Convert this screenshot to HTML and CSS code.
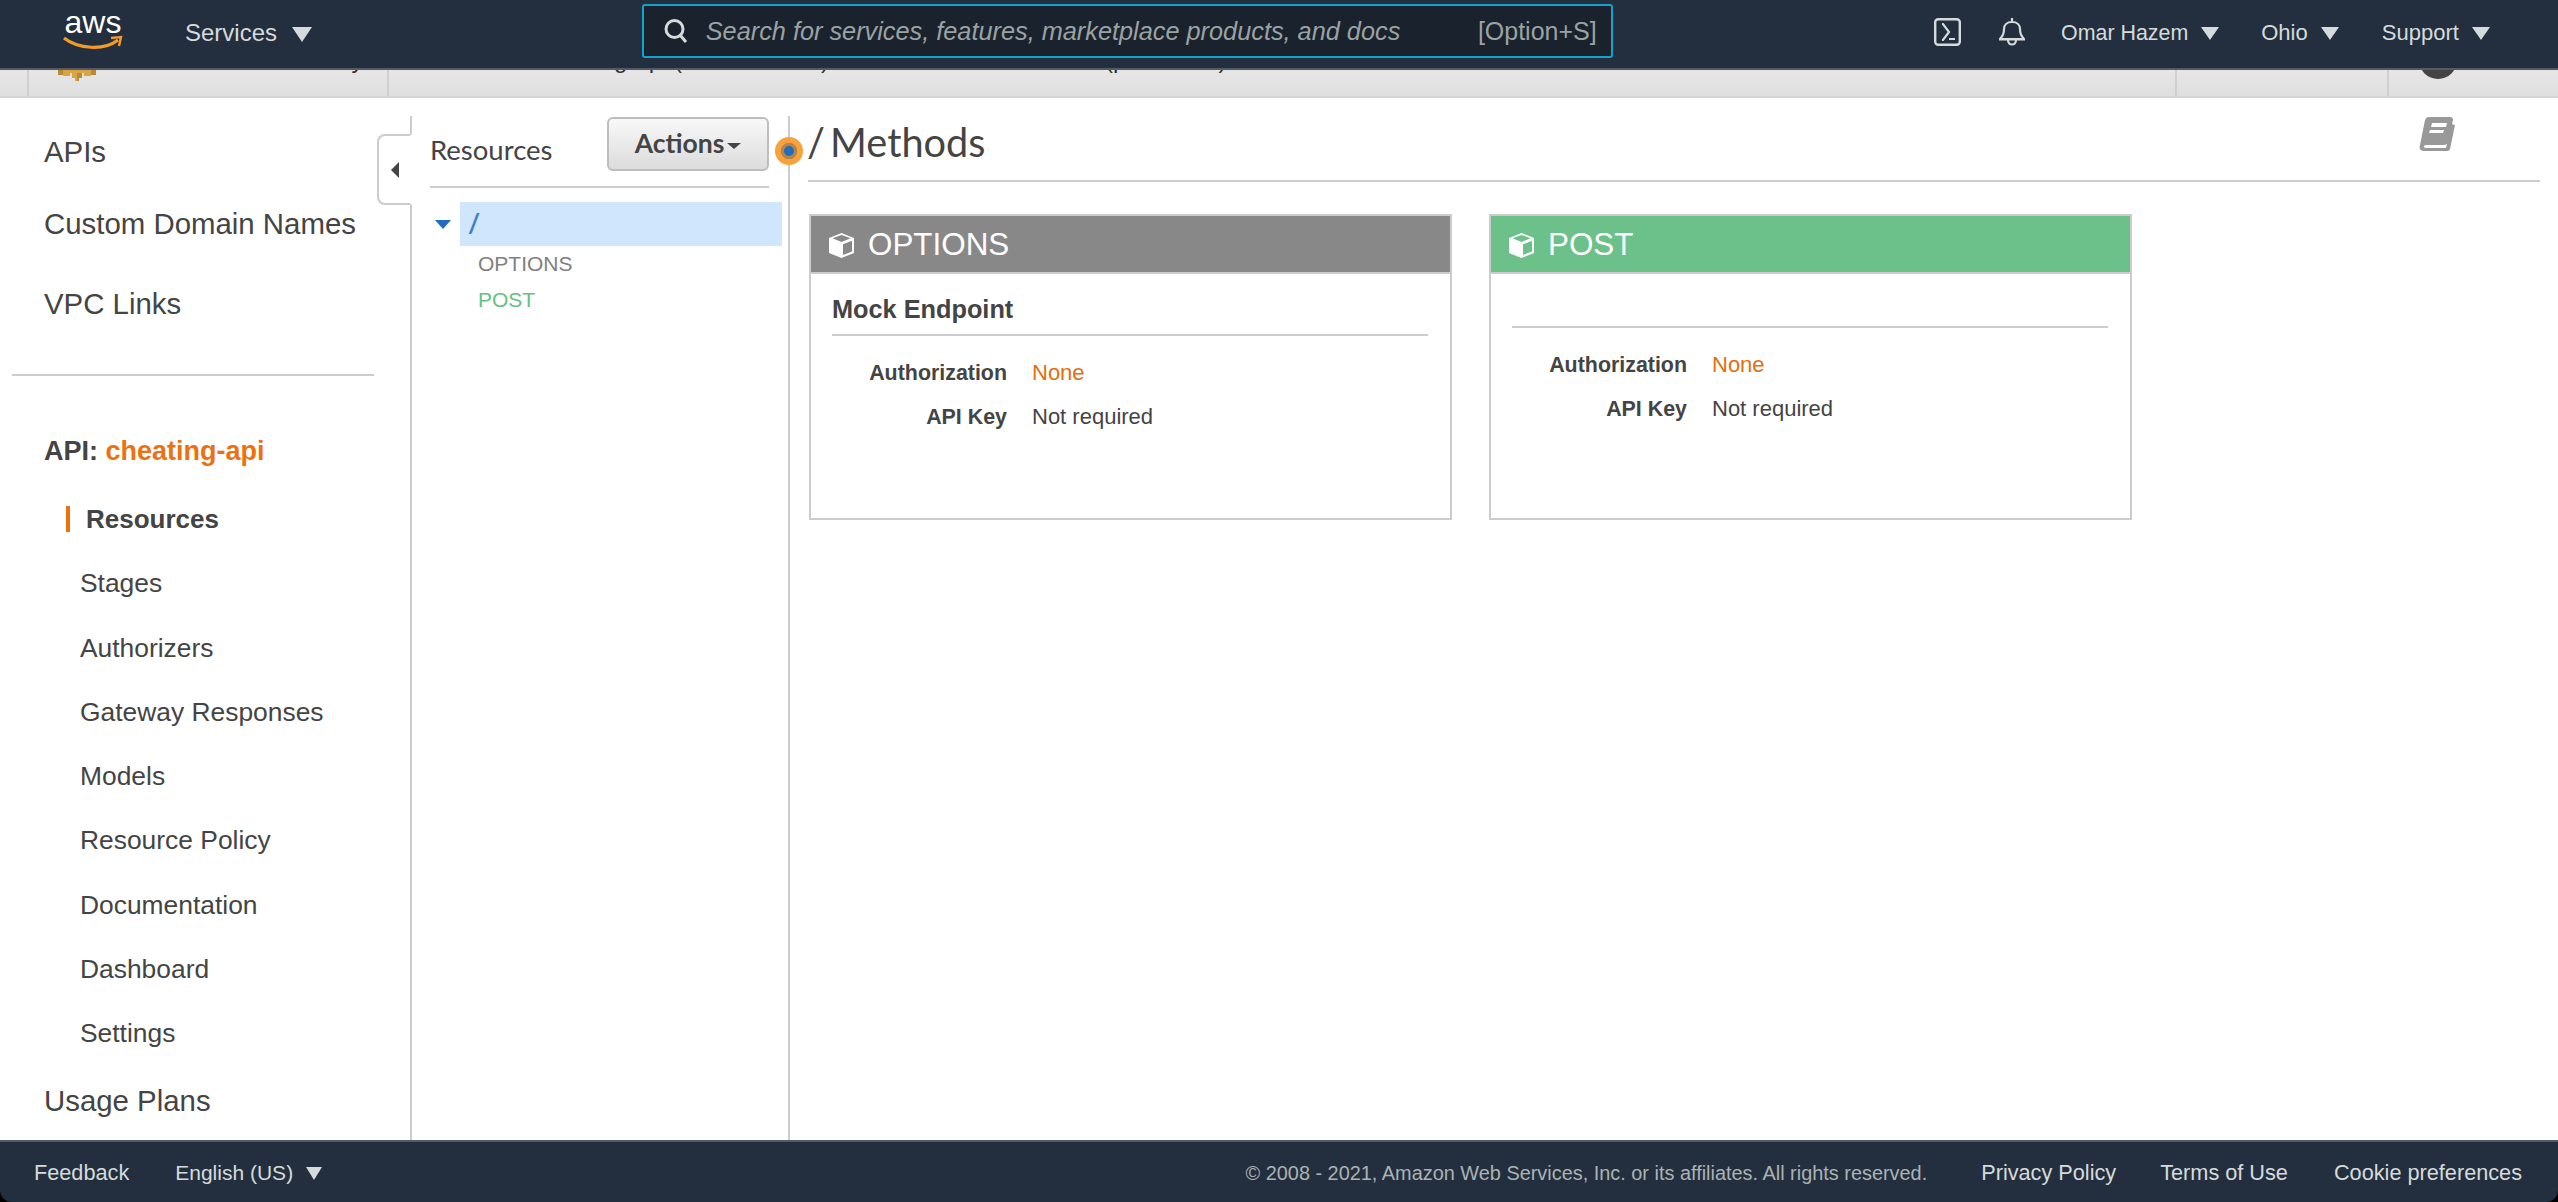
FILE: index.html
```html
<!DOCTYPE html>
<html lang="en">
<head>
  <meta charset="UTF-8" />
  <title>API Gateway - Resources</title>
  <link rel="stylesheet" href="styles.css">
</head>
<body>
  <header class="topbar">
    <svg class="aws-logo" width="62" height="42" viewBox="0 0 62 42">
      <text x="31" y="20" text-anchor="middle" class="aws-text">aws</text>
      <path d="M2 25 C16 36 42 38 56 27" fill="none" stroke="#f39c24" stroke-width="3.2"/>
      <path d="M49 25 L59 24 L57 33" fill="none" stroke="#f39c24" stroke-width="2.4"/>
    </svg>
    <span class="nav-link services">Services <i class="caret big"></i></span>
    <div class="search">
      <svg width="28" height="28" viewBox="0 0 28 28"><circle cx="12.5" cy="12" r="8.5" fill="none" stroke="#d5dbdb" stroke-width="3"/><path d="M18 18l6 7" stroke="#d5dbdb" stroke-width="3"/></svg>
      <span class="search-text">Search for services, features, marketplace products, and docs</span>
      <span class="search-key">[Option+S]</span>
    </div>
    <div class="top-right">
      <svg class="ic-shell" width="27" height="28" viewBox="0 0 27 28"><rect x="1.2" y="1.2" width="24.6" height="25.6" rx="3" fill="none" stroke="#d5dbdb" stroke-width="2.4"/><path d="M8 6h1l6 8-6 8H8M15 21h6" fill="none" stroke="#d5dbdb" stroke-width="2.2"/></svg>
      <svg class="ic-bell" width="28" height="28" viewBox="0 0 28 28"><path d="M14 0v4M2 21c3-3 4-6 4-10 0-4 3-7 8-7s8 3 8 7c0 4 1 7 4 10zM1 21.500h26M10 22c0 6 8 6 8 0" fill="none" stroke="#d5dbdb" stroke-width="2.2" stroke-linejoin="round"/></svg>
      <span class="nav-link user">Omar Hazem <i class="caret"></i></span>
      <span class="nav-link ohio">Ohio <i class="caret"></i></span>
      <span class="nav-link support">Support <i class="caret"></i></span>
    </div>
  </header>

  <div class="subbar">
    <div class="sub-cell sub-name">
      <svg width="38" height="11" viewBox="0 0 38 11"><path d="M0 0h38v5h-5v1h-7V3h-2v5h-3v3h-4V8h-3V3h-2v3H5V5H0z" fill="#d9a441"/><path d="M19 3h5v5h-3v3h-2zM0 0h5v5H0zM33 0h5v5h-5z" fill="#b98a35"/></svg>
      <span class="sub-text">Amazon API Gateway</span>
    </div>
    <div class="sub-cell sub-crumb">
      <span class="sub-text">APIs</span>
      <span class="sub-text">cheating-api (a1b2c3d4e5f)</span>
      <span class="sub-text crumb-mid">Resources</span>
      <span class="sub-text">/ (p1a2b3c4)</span>
    </div>
    <div class="sub-cell sub-blank"></div>
    <div class="sub-cell sub-help"><span class="help-dot"></span></div>
  </div>

  <main class="content">
    <nav class="sidebar">
      <ul class="nav-top">
        <li>APIs</li>
        <li>Custom Domain Names</li>
        <li>VPC Links</li>
      </ul>
      <div class="nav-title">API: <span class="api-name">cheating-api</span></div>
      <ul class="nav-sub">
        <li class="active">Resources</li>
        <li>Stages</li>
        <li>Authorizers</li>
        <li>Gateway Responses</li>
        <li>Models</li>
        <li>Resource Policy</li>
        <li>Documentation</li>
        <li>Dashboard</li>
        <li>Settings</li>
      </ul>
      <div class="nav-bottom">Usage Plans</div>
      <div class="collapse-tab"><i class="tab-arrow"></i></div>
    </nav>

    <section class="resources">
      <div class="res-head">
        <span class="res-title">Resources</span>
        <button class="actions">Actions<i class="actions-caret"></i></button>
      </div>
      <div class="tree-root">
        <i class="tree-caret"></i>
        <div class="tree-selected">/</div>
      </div>
      <div class="tree-method options">OPTIONS</div>
      <div class="tree-method post">POST</div>
      <div class="drag-dot"></div>
    </section>

    <section class="methods">
      <div class="methods-head">
        <h1>/ Methods</h1>
        <svg class="book" width="37" height="34" viewBox="0 0 37 34"><path d="M10 0h21c2 0 3 1 3 3l-5 22c-1 2-2 3-4 3H7c-3 0-3 3 0 3h20l6-24 1 .500 2 .500-5 24c-1 2-2 2-4 2H5c-4 0-5-3-4-6L6 3c1-2 2-3 4-3z" fill="#999"/><path d="M13 6h15l-1 4H12zM11 13h14l-1 3H10z" fill="#fff"/></svg>
      </div>
      <div class="cards">
        <article class="card">
          <div class="card-head head-options">
            <svg width="27" height="27" viewBox="0 0 27 27"><path d="M13.500 1L26 6v15l-12.500 5L1 21V6zM4.500 6.300l9 3.600 9-3.600-9-3.400zM15 12.300v10.600l9-3.500V8.800z" fill="#fff" fill-rule="evenodd"/></svg>
            OPTIONS
          </div>
          <div class="card-body">
            <div class="card-sub">Mock Endpoint</div>
            <div class="kv"><b>Authorization</b><span class="none">None</span></div>
            <div class="kv"><b>API Key</b><span>Not required</span></div>
          </div>
        </article>
        <article class="card">
          <div class="card-head head-post">
            <svg width="27" height="27" viewBox="0 0 27 27"><path d="M13.500 1L26 6v15l-12.500 5L1 21V6zM4.500 6.300l9 3.600 9-3.600-9-3.400zM15 12.300v10.600l9-3.500V8.800z" fill="#fff" fill-rule="evenodd"/></svg>
            POST
          </div>
          <div class="card-body">
            <div class="card-sub empty"></div>
            <div class="kv"><b>Authorization</b><span class="none">None</span></div>
            <div class="kv"><b>API Key</b><span>Not required</span></div>
          </div>
        </article>
      </div>
    </section>
  </main>

  <footer class="footer">
    <span class="foot-link feedback">Feedback</span>
    <span class="foot-link lang">English (US) <i class="caret small"></i></span>
    <span class="copy">© 2008 - 2021, Amazon Web Services, Inc. or its affiliates. All rights reserved.</span>
    <span class="foot-link privacy">Privacy Policy</span>
    <span class="foot-link terms">Terms of Use</span>
    <span class="foot-link cookie">Cookie preferences</span>
  </footer>
</body>
</html>
```

FILE: styles.css
```css
html, body { margin: 0; height: 100%; }
body { width: 2558px; height: 1202px; overflow: hidden; display: flex; flex-direction: column; background: #000; font-family: "Liberation Sans", Arial, sans-serif; color: #444; }
ul { list-style: none; margin: 0; padding: 0; }
i { display: inline-block; }

.topbar { height: 68px; flex: none; background: #232f3e; border-bottom: 2px solid #545b64; display: flex; align-items: center; position: relative; z-index: 2; }
.aws-logo { margin-left: 62px; }
.aws-text { font: 32px "Liberation Sans", sans-serif; fill: #fff; }
.nav-link { font-size: 22px; color: #d5dbdb; white-space: nowrap; margin-bottom: 2px; }
.services { font-size: 24px; margin-left: 61px; }
.caret { width: 0; height: 0; border-left: 9px solid transparent; border-right: 9px solid transparent; border-top: 13px solid #d5dbdb; margin-left: 7px; vertical-align: 0; }
.caret.big { border-left-width: 10px; border-right-width: 10px; border-top-width: 15px; margin-left: 8px; vertical-align: -1px; }
.caret.small { border-left-width: 8px; border-right-width: 8px; margin-left: 7px; }
.search { width: 971px; height: 54px; margin-left: 330px; margin-bottom: 6px; box-sizing: border-box; border: 2px solid #12a3cb; border-radius: 3px; background: #1a222d; display: flex; align-items: center; padding: 0 14px 0 18px; }
.search-text { font-size: 25.3px; font-style: italic; color: #9aa3a3; margin-left: 16px; white-space: nowrap; flex: 1; }
.search-key { font-size: 25px; color: #9aa3a3; white-space: nowrap; }
.top-right { margin-left: auto; display: flex; align-items: center; padding-right: 68px; }
.ic-shell { margin-top: -4px; }
.ic-bell { margin-left: 37px; margin-top: -4px; }
.user { margin-left: 35px; font-size: 21.4px; }
.ohio { margin-left: 42px; }
.support { margin-left: 43px; }

.subbar { height: 26px; flex: none; background: linear-gradient(#e6e6e6, #dfdfdf); border-bottom: 2px solid #d5d5d5; display: flex; overflow: hidden; }
.sub-cell { height: 26px; box-sizing: border-box; border-left: 2px solid #cfcfcf; position: relative; overflow: hidden; font-size: 24px; line-height: 24px; color: #333; white-space: nowrap; display: flex; }
.sub-text { display: block; margin-top: -22px; }
.sub-name { margin-left: 27px; width: 360px; padding-left: 29px; }
.sub-name svg { flex: none; margin-right: 34px; }
.sub-crumb { flex: 1; padding-left: 63px; gap: 34px; }
.crumb-mid { margin: -22px 40px 0; }
.sub-blank { width: 212px; flex: none; }
.sub-help { width: 171px; flex: none; }
.help-dot { position: absolute; left: 30px; top: -29px; width: 38px; height: 38px; border-radius: 50%; background: #444; }

.content { flex: 1; display: flex; min-height: 0; background: #fff; }

.sidebar { width: 412px; flex: none; box-sizing: border-box; border-right: 2px solid #ccc; margin-top: 18px; position: relative; padding-top: 16px; font-size: 29.4px; color: #444; }
.nav-top { margin: 0 36px 0 12px; padding: 0 0 50px 32px; border-bottom: 2px solid #ccc; }
.nav-top li { line-height: 40px; margin-bottom: 40px; white-space: nowrap; }
.nav-top li:nth-child(1) { margin-bottom: 32px; }
.nav-top li:nth-child(3) { margin-bottom: 0; }
.nav-title { font-size: 27px; font-weight: bold; margin: 56px 0 0 44px; line-height: 38px; }
.api-name { color: #ec7211; }
.nav-sub { margin: 36px 0 0 0; font-size: 26.4px; }
.nav-sub li { line-height: 34px; margin-bottom: 30.3px; padding-left: 80px; white-space: nowrap; }
.nav-sub .active { font-size: 26px; font-weight: bold; line-height: 26px; margin: 4px 0 34.3px 66px; border-left: 4px solid #ec7211; padding-left: 16px; }
.nav-bottom { margin: 11px 0 0 44px; line-height: 40px; }
.collapse-tab { position: absolute; right: -2px; top: 18px; width: 35px; height: 71px; box-sizing: border-box; background: #fff; border: 2px solid #ccc; border-right: 2px solid #fff; border-radius: 8px 0 0 8px; display: flex; align-items: center; justify-content: center; }
.tab-arrow { width: 0; height: 0; border-top: 8px solid transparent; border-bottom: 8px solid transparent; border-right: 8px solid #444; }

.resources { width: 378px; flex: none; box-sizing: border-box; border-right: 2px solid #ccc; margin-top: 18px; position: relative; font-size: 21px; }
.res-head { margin: 0 19px 0 18px; height: 70px; border-bottom: 2px solid #ccc; display: flex; align-items: flex-start; justify-content: space-between; }
.res-title { font: 27.5px Lato, sans-serif; color: #444; margin-top: 17px; }
.actions { width: 162px; height: 54px; margin-top: 1px; padding: 0 0 2px; border: 2px solid #bdbdbd; border-radius: 6px; background: linear-gradient(#f8f8f8, #dcdcdc); font: bold 26.5px Lato, sans-serif; color: #444; }
.actions-caret { width: 0; height: 0; border-left: 7px solid transparent; border-right: 7px solid transparent; border-top: 6px solid #444; margin-left: 3px; vertical-align: 4px; }
.tree-root { display: flex; align-items: center; margin: 14px 6px 0 0; }
.tree-caret { width: 0; height: 0; border-left: 8px solid transparent; border-right: 8px solid transparent; border-top: 9px solid #1f6dc0; margin-left: 23px; flex: none; }
.tree-selected { margin-left: 9px; flex: 1; height: 44px; background: #cfe6fc; color: #3d7fc4; font: bold 26px Lato, sans-serif; line-height: 42px; padding-left: 8px; }
.tree-method { padding-left: 66px; line-height: 36px; }
.options { color: #808080; margin-top: 0; }
.post { color: #64c183; }
.drag-dot { position: absolute; right: -15px; top: 21px; width: 16px; height: 16px; border-radius: 50%; background: #1f6dc0; border: 6px solid #f7a23c; box-shadow: inset 0 0 0 3px #b8843f; }

.methods { flex: 1; min-width: 0; margin-top: 18px; }
.methods-head { margin: 0 18px; height: 64px; border-bottom: 2px solid #ccc; display: flex; justify-content: space-between; align-items: flex-start; }
.methods-head h1 { margin: 0 0 0 -1px; font: 400 39.7px Lato, sans-serif; word-spacing: -5px; color: #444; line-height: 52px; }
.book { margin: 1px 84px 0 0; }
.cards { display: flex; gap: 37px; margin: 32px 0 0 19px; }
.card { width: 643px; height: 306px; box-sizing: border-box; border: 2px solid #ccc; }
.card-head { height: 54px; padding: 2px 0 0 17px; border-bottom: 2px solid #ccc; display: flex; align-items: center; gap: 13px; color: #fff; font-size: 31.4px; }
.head-options { background: #888; }
.head-post { background: #6cc18a; }
.card-body { padding: 0 22px 0 21px; font-size: 22px; }
.card-sub { font-size: 25.300px; font-weight: bold; height: 60px; line-height: 71px; border-bottom: 2px solid #ccc; }
.card-sub.empty { height: 52px; }
.kv { display: flex; line-height: 34px; margin-top: 10px; }
.card-sub + .kv { margin-top: 20px; }
.kv b { width: 175px; font-size: 21.4px; text-align: right; margin-right: 25px; color: #444; white-space: nowrap; }
.none { color: #e1700f; }

.footer { height: 62px; flex: none; box-sizing: border-box; background: #232f3e; border-top: 2px solid #545b64; border-radius: 0 0 12px 12px; display: flex; align-items: center; color: #d5dbdb; font-size: 21.7px; padding: 2px 36px 0 34px; position: relative; z-index: 2; }
.foot-link { white-space: nowrap; }
.lang { margin-left: 46px; font-size: 21px; }
.copy { margin-left: auto; font-size: 19.9px; color: #aab3b3; white-space: nowrap; }
.privacy { margin-left: 54px; }
.terms { margin-left: 44px; }
.cookie { margin-left: 46px; }
```
